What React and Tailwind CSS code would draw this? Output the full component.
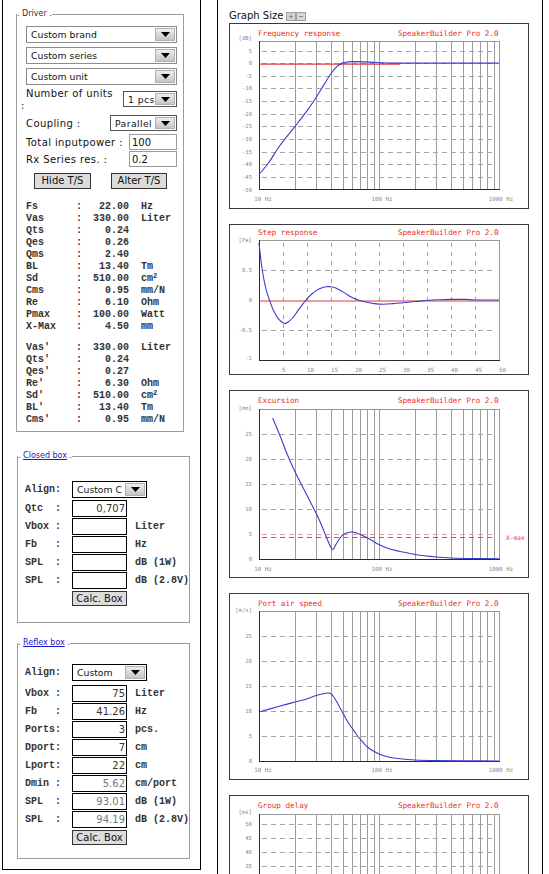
import React from 'react'

const SANS = "font-['DejaVu_Sans',Verdana,sans-serif]"
const MONO = "font-['Liberation_Mono','Courier_New',monospace] font-bold"
const CHART_FONT = "'DejaVu Sans Mono', monospace"

const DRIVER_TS = [
  ['Fs', '22.00', 'Hz'],
  ['Vas', '330.00', 'Liter'],
  ['Qts', '0.24'],
  ['Qes', '0.26'],
  ['Qms', '2.40'],
  ['BL', '13.40', 'Tm'],
  ['Sd', '510.00', 'cm2'],
  ['Cms', '0.95', 'mm/N'],
  ['Re', '6.10', 'Ohm'],
  ['Pmax', '100.00', 'Watt'],
  ['X-Max', '4.50', 'mm'],
]

const DERIVED_TS = [
  ["Vas'", '330.00', 'Liter'],
  ["Qts'", '0.24'],
  ["Qes'", '0.27'],
  ["Re'", '6.30', 'Ohm'],
  ["Sd'", '510.00', 'cm2'],
  ["BL'", '13.40', 'Tm'],
  ["Cms'", '0.95', 'mm/N'],
]

const CLOSED_ROWS = [
  ['Vbox :', '', 'Liter'],
  ['Fb   :', '', 'Hz'],
  ['SPL  :', '', 'dB (1W)'],
  ['SPL  :', '', 'dB (2.8V)'],
]

const REFLEX_ROWS = [
  ['Vbox :', '75', 'Liter'],
  ['Fb   :', '41.26', 'Hz'],
  ['Ports:', '3', 'pcs.'],
  ['Dport:', '7', 'cm'],
  ['Lport:', '22', 'cm'],
  ['Dmin :', '5.62', 'cm/port', true],
  ['SPL  :', '93.01', 'dB (1W)', true],
  ['SPL  :', '94.19', 'dB (2.8V)', true],
]

// ---------- form bits ----------

function Select({ label, className }) {
  return (
    <div className={`flex bg-white border p-[1px] ${className}`}>
      <span className={`flex-1 pl-[3px] text-[9.3px] leading-[13px] text-[#111] truncate ${SANS}`}>{label}</span>
      <span className="w-[20px] flex items-center justify-center bg-linear-to-b from-[#eeeeee] to-[#c4c4c4] border border-[#b0b0b0]">
        <svg width="9" height="5" viewBox="0 0 9 5">
          <path d="M0 0H9L4.5 5Z" fill="#000" />
        </svg>
      </span>
    </div>
  )
}

function Unit({ u }) {
  if (u === 'cm2') return <span>cm<sup className="text-[7px]">2</sup></span>
  return <span>{u}</span>
}

function TsRow({ row }) {
  const [name, val, unit] = row
  return (
    <div className="flex h-[12px] items-center leading-[12px]">
      <span className="w-[50px]">{name}</span>
      <span className="w-[6px]">:</span>
      <span className="w-[47px] text-right">{val}</span>
      <span className="ml-[12px]">{unit && <Unit u={unit} />}</span>
    </div>
  )
}

function BoxRow({ label, value, unit, dim }) {
  return (
    <div className="flex h-[18px] items-center">
      <span className={`w-[47px] whitespace-pre text-[10px] text-[#333] ${MONO}`}>{label}</span>
      <input
        readOnly
        value={value}
        className={`w-[55px] h-[17px] border border-black bg-white text-right pr-[1px] text-[10px] ${SANS} ${dim ? 'text-[#777]' : 'text-[#333]'}`}
      />
      <span className={`ml-[8px] whitespace-pre text-[10px] text-[#333] ${MONO}`}>{unit}</span>
    </div>
  )
}

function CalcButton() {
  return (
    <button className={`block ml-[47px] mt-[2px] w-[55px] h-[15px] bg-[#dcdcdc] border border-[#333] text-[10px] leading-[13px] text-[#111] ${SANS}`}>
      Calc. Box
    </button>
  )
}

// ---------- charts ----------

const X0 = 29
const X1 = 269
const FREQ_LINES = [20, 30, 40, 50, 60, 70, 80, 90, 100, 200, 300, 400, 500, 600, 700, 800, 900]
const lx = (f) => X0 + 120 * Math.log10(f / 10)

function smooth(pts) {
  let d = `M${pts[0][0].toFixed(2)} ${pts[0][1].toFixed(2)}`
  for (let i = 0; i < pts.length - 1; i++) {
    const p0 = pts[i - 1] || pts[i]
    const p1 = pts[i]
    const p2 = pts[i + 1]
    const p3 = pts[i + 2] || p2
    const c1x = p1[0] + (p2[0] - p0[0]) / 6
    const c1y = p1[1] + (p2[1] - p0[1]) / 6
    const c2x = p2[0] - (p3[0] - p1[0]) / 6
    const c2y = p2[1] - (p3[1] - p1[1]) / 6
    d += ` C${c1x.toFixed(2)} ${c1y.toFixed(2)} ${c2x.toFixed(2)} ${c2y.toFixed(2)} ${p2[0].toFixed(2)} ${p2[1].toFixed(2)}`
  }
  return d
}

function Frame({ h, children }) {
  return <div className={`w-[300px] shrink-0 border border-[#3a3a3a] bg-white ${h}`}>{children}</div>
}

function Title({ text, y = 12 }) {
  return (
    <g fontFamily={CHART_FONT} fontSize="7.6" fill="#ee2b2b">
      <text x="28" y={y}>{text}</text>
      <text x="268.5" y={y} textAnchor="end">SpeakerBuilder Pro 2.0</text>
    </g>
  )
}

function YLabels({ items }) {
  return (
    <g fontFamily={CHART_FONT} fontSize="5.6" fill="#8a8a8a" textAnchor="end">
      {items.map(([t, y]) => (
        <text key={t} x="22" y={y + 2}>{t}</text>
      ))}
    </g>
  )
}

function LogXLabels({ y }) {
  return (
    <g fontFamily={CHART_FONT} fontSize="5.8" fill="#8a8a8a" textAnchor="middle">
      <text x={lx(10) + 4} y={y}>10 Hz</text>
      <text x={lx(100) + 3} y={y}>100 Hz</text>
      <text x={lx(1000) + 2} y={y}>1000 Hz</text>
    </g>
  )
}

function Axes({ top, bottom }) {
  return (
    <g shapeRendering="crispEdges">
      <line x1={X0} x2={X1} y1={top + 0.5} y2={top + 0.5} stroke="#9a9a9a" />
      <line x1={X1 + 0.5} x2={X1 + 0.5} y1={top} y2={bottom} stroke="#9a9a9a" />
      <line x1={X0 + 0.5} x2={X0 + 0.5} y1={top} y2={bottom + 1} stroke="#2a2a2a" />
      <line x1={X0} x2={X1 + 1} y1={bottom + 0.5} y2={bottom + 0.5} stroke="#2a2a2a" />
    </g>
  )
}

function LogGrid({ top, bottom, hLines }) {
  return (
    <g shapeRendering="crispEdges">
      {FREQ_LINES.map((f) => {
        const x = Math.round(lx(f)) + 0.5
        return <line key={f} x1={x} x2={x} y1={top} y2={bottom} stroke="#9c9c9c" />
      })}
      {hLines.map((y) => (
        <line key={y} x1={X0 + 3} x2={X1 - 4} y1={Math.round(y) + 0.5} y2={Math.round(y) + 0.5} stroke="#a4a4a4" strokeDasharray="5 4" />
      ))}
    </g>
  )
}

function FrequencyChart() {
  const fy = (db) => 165.5 - ((db + 50) * 139) / 55
  const ticks = [5, 0, -5, -10, -15, -20, -25, -30, -35, -40, -45, -50]
  const pts = [
    [10, -44], [12, -39.5], [15, -32.5], [20, -25], [25, -19], [30, -13.5], [35, -8.3],
    [40, -4], [45, -1.2], [50, 0.1], [55, 0.5], [62, 0.6], [75, 0.5], [90, 0.3], [110, 0.1], [150, 0], [1000, 0],
  ].map(([f, v]) => [lx(f), fy(v)])
  return (
    <Frame h="h-[186px]">
      <svg width="298" height="184" className="block">
        <Title text="Frequency response" />
        <LogGrid top={17} bottom={166} hLines={ticks.slice(0, -1).map(fy)} />
        <Axes top={17} bottom={165} />
        <YLabels items={[['[dB]', 14], ...ticks.map((t) => [String(t), fy(t)])]} />
        <LogXLabels y={177} />
        <line x1={X0} x2={lx(150)} y1={fy(0) + 1} y2={fy(0) + 1} stroke="#e23a3a" strokeWidth="1.2" />
        <path d={smooth(pts)} fill="none" stroke="#3b3bd0" strokeWidth="1.1" />
      </svg>
    </Frame>
  )
}

function StepChart() {
  const sx = (t) => X0 + t * 4.8
  const sy = (v) => 75 - v * 60
  const pts = [
    [0, 0.95], [0.5, 0.6], [1, 0.35], [1.5, 0.17], [2, 0.04], [2.5, -0.07], [3, -0.17], [4, -0.31],
    [5, -0.38], [5.5, -0.39], [6, -0.37], [7, -0.3], [8, -0.19], [9, -0.08], [10, 0.02], [11, 0.1],
    [12, 0.16], [13, 0.2], [14, 0.22], [15, 0.22], [16, 0.2], [17, 0.16], [18, 0.11], [19, 0.06],
    [20, 0.02], [21, -0.01], [22, -0.03], [24, -0.06], [26, -0.07], [28, -0.06], [30, -0.045],
    [32, -0.03], [34, -0.015], [36, 0], [38, 0.005], [40, 0.01], [43, 0.01], [45, 0], [50, 0],
  ].map(([t, v]) => [sx(t), sy(v)])
  return (
    <Frame h="h-[151px]">
      <svg width="298" height="149" className="block">
        <Title text="Step response" y={10} />
        <g shapeRendering="crispEdges">
          {[5, 10, 15, 20, 25, 30, 35, 40, 45].map((t) => {
            const x = Math.round(sx(t)) + 0.5
            return <line key={t} x1={x} x2={x} y1={18} y2={135} stroke="#a4a4a4" strokeDasharray="4 5" />
          })}
          {[0.5, -0.5].map((v) => (
            <line key={v} x1={X0 + 3} x2={X1 - 4} y1={sy(v) + 0.5} y2={sy(v) + 0.5} stroke="#a4a4a4" strokeDasharray="5 4" />
          ))}
        </g>
        <Axes top={15} bottom={135} />
        <YLabels items={[['[Pa]', 15], ['0.5', 45], ['0', 75], ['-0.5', 105], ['-1', 133]]} />
        <g fontFamily={CHART_FONT} fontSize="5.8" fill="#8a8a8a">
          {[5, 10, 15, 20, 25, 30, 35, 40, 45, 50].map((t) => (
            <text key={t} x={sx(t) - (t < 10 ? 1 : 0)} y={146.5}>{t}</text>
          ))}
        </g>
        <line x1={X0} x2={X1} y1={76} y2={76} stroke="#e23a3a" strokeWidth="1.2" />
        <path d={smooth(pts)} fill="none" stroke="#3b3bd0" strokeWidth="1.1" />
      </svg>
    </Frame>
  )
}

function ExcursionChart() {
  const ey = (mm) => 168 - mm * 5
  const pts = [
    [13, 28.2], [15, 24.6], [17, 21.2], [20, 17.4], [25, 12.8], [30, 9.1], [33, 6.9], [36, 4.7],
    [38, 3.3], [40, 2.2], [41, 1.9], [42, 2.1], [44, 3.0], [47, 4.1], [50, 4.8], [55, 5.3], [60, 5.4],
    [65, 5.2], [70, 4.9], [80, 4.2], [90, 3.5], [100, 2.9], [120, 2.1], [150, 1.5], [200, 0.9],
    [300, 0.4], [400, 0.2], [600, 0.1], [1000, 0.05],
  ].map(([f, v]) => [lx(f), ey(v)])
  return (
    <Frame h="h-[188px]">
      <svg width="298" height="186" className="block">
        <Title text="Excursion" />
        <LogGrid top={18} bottom={168} hLines={[25, 20, 15, 10].map(ey)} />
        <line x1={X0 + 3} x2={X1 - 4} y1={143.5} y2={143.5} stroke="#e79a9a" strokeDasharray="5 4" />
        <line x1={X0 + 3} x2={X1 - 4} y1={146.5} y2={146.5} stroke="#e04848" strokeDasharray="5 4" />
        <Axes top={18} bottom={168} />
        <YLabels items={[['[mm]', 17], ['25', ey(25)], ['20', ey(20)], ['15', ey(15)], ['10', ey(10)], ['5', ey(5)], ['0', ey(0)]]} />
        <text x="276" y="149" fontFamily={CHART_FONT} fontSize="6.2" fill="#e23a3a">X-max</text>
        <LogXLabels y={179.5} />
        <path d={smooth(pts)} fill="none" stroke="#3b3bd0" strokeWidth="1.1" />
      </svg>
    </Frame>
  )
}

function PortChart() {
  const py = (v) => 167 - v * 5
  const pts = [
    [10, 9.8], [15, 11], [20, 11.8], [25, 12.4], [30, 13.1], [35, 13.5], [38, 13.6], [40, 13.4],
    [42, 12.8], [45, 11.6], [50, 9.6], [55, 7.8], [60, 6.5], [65, 5.3], [70, 4.3], [80, 2.8],
    [90, 2.0], [100, 1.4], [120, 0.8], [150, 0.45], [200, 0.2], [300, 0.08], [500, 0.03], [1000, 0],
  ].map(([f, v]) => [lx(f), py(v)])
  return (
    <Frame h="h-[187px]">
      <svg width="298" height="185" className="block">
        <Title text="Port air speed" />
        <LogGrid top={17} bottom={167} hLines={[25, 20, 15, 10, 5].map(py)} />
        <Axes top={17} bottom={167} />
        <YLabels items={[['[m/s]', 16], ['25', py(25)], ['20', py(20)], ['15', py(15)], ['10', py(10)], ['5', py(5)], ['0', py(0)]]} />
        <LogXLabels y={177.5} />
        <path d={smooth(pts)} fill="none" stroke="#3b3bd0" strokeWidth="1.1" />
      </svg>
    </Frame>
  )
}

// only the top of this one is inside the window
function GroupDelayChart() {
  const gy = (ms) => 28 + (50 - ms) * 2.8
  const ticks = [50, 45, 40, 35, 30, 25, 20, 15, 10, 5]
  const pts = [
    [10, 10], [20, 16], [30, 22], [38, 24], [45, 18], [55, 11], [70, 6], [100, 3], [200, 1], [1000, 0.2],
  ].map(([f, v]) => [lx(f), gy(v)])
  return (
    <Frame h="h-[188px]">
      <svg width="298" height="186" className="block">
        <Title text="Group delay" />
        <LogGrid top={18} bottom={168} hLines={ticks.map(gy)} />
        <Axes top={18} bottom={168} />
        <YLabels items={[['[ms]', 16], ...[50, 45, 40, 35].map((t) => [String(t), gy(t)])]} />
        <path d={smooth(pts)} fill="none" stroke="#3b3bd0" strokeWidth="1.1" />
      </svg>
    </Frame>
  )
}

// ---------- panels ----------

function DriverFieldset() {
  return (
    <fieldset className="ml-[13px] mt-[9px] w-[168px] border border-[#9c9c9c]">
      <legend className={`text-[8px] leading-[10px] text-[#333] ${SANS}`}>. Driver .</legend>
      <div className={`pl-[4px] pr-[6px] pt-[7px] pb-[5px] ${SANS}`}>
        <div className="flex flex-col gap-[4px] pl-[5px]">
          <Select label="Custom brand" className="h-[17px] border-[#8c8c8c]" />
          <Select label="Custom series" className="h-[17px] border-[#8c8c8c]" />
          <Select label="Custom unit" className="h-[17px] border-[#8c8c8c]" />
        </div>

        <div className="mt-[3px] flex justify-between text-[10px] tracking-[0.4px] text-[#111]">
          <div className="leading-[12px]">
            <div className="pl-[5px]">Number of units</div>
            <div>:</div>
          </div>
          <Select label="1 pcs" className="mt-[3px] w-[54px] h-[16px] border-[#555]" />
        </div>

        <div className="mt-[2px] flex h-[18px] items-center justify-between text-[10px] tracking-[0.4px] text-[#111]">
          <span className="pl-[5px]">Coupling :</span>
          <Select label="Parallel" className="w-[67px] h-[16px] border-[#555]" />
        </div>

        <div className="mt-[2px] flex h-[16px] items-center justify-between text-[10px] tracking-[0.4px] text-[#111]">
          <span className="pl-[5px]">Total inputpower :</span>
          <input readOnly value="100" className="w-[48px] h-[16px] border border-[#9c9c9c] bg-white pl-[2px] text-[10px] tracking-normal" />
        </div>

        <div className="mt-[1px] flex h-[16px] items-center justify-between text-[10px] tracking-[0.4px] text-[#111]">
          <span className="pl-[5px]">Rx Series res. :</span>
          <input readOnly value="0.2" className="w-[48px] h-[16px] border border-[#9c9c9c] bg-white pl-[2px] text-[10px] tracking-normal" />
        </div>

        <div className="mt-[6px] flex gap-[20px] pl-[13px]">
          <button className="w-[57px] h-[16px] bg-[#dcdcdc] border border-[#333] text-[10px] leading-[14px] text-[#111]">Hide T/S</button>
          <button className="w-[56px] h-[16px] bg-[#dcdcdc] border border-[#333] text-[10px] leading-[14px] text-[#111]">Alter T/S</button>
        </div>

        <div className={`mt-[12px] pl-[5px] text-[10px] text-[#333] ${MONO}`}>
          {DRIVER_TS.map((r) => <TsRow key={r[0]} row={r} />)}
          <div className="mt-[9px]">
            {DERIVED_TS.map((r) => <TsRow key={r[0]} row={r} />)}
          </div>
        </div>
      </div>
    </fieldset>
  )
}

function BoxLegend({ name }) {
  return (
    <legend className={`text-[8px] leading-[10px] text-[#333] ${SANS}`}>
      . <a href="#" className="text-[#1a1acc] underline">{name}</a> .
    </legend>
  )
}

function ClosedBoxFieldset() {
  return (
    <fieldset className="ml-[14px] mt-[19px] w-[173px] border border-[#9c9c9c]">
      <BoxLegend name="Closed box" />
      <div className="pl-[7px] pt-[19px] pb-[16px]">
        <div className="flex h-[18px] items-center">
          <span className={`w-[47px] text-[10px] text-[#333] ${MONO}`}>Align:</span>
          <Select label="Custom C" className="w-[75px] h-[17px] border-black" />
        </div>
        <div className="mt-[1px]">
          <BoxRow label="Qtc  :" value="0,707" />
          {CLOSED_ROWS.map(([l, v, u], i) => <BoxRow key={i} label={l} value={v} unit={u} />)}
        </div>
        <CalcButton />
      </div>
    </fieldset>
  )
}

function ReflexBoxFieldset() {
  return (
    <fieldset className="ml-[14px] mt-[15px] w-[173px] border border-[#9c9c9c]">
      <BoxLegend name="Reflex box" />
      <div className="pl-[7px] pt-[15px] pb-[13px]">
        <div className="flex h-[18px] items-center">
          <span className={`w-[47px] text-[10px] text-[#333] ${MONO}`}>Align:</span>
          <Select label="Custom" className="w-[75px] h-[17px] border-black" />
        </div>
        <div className="mt-[3px]">
          {REFLEX_ROWS.map(([l, v, u, dim], i) => <BoxRow key={i} label={l} value={v} unit={u} dim={dim} />)}
        </div>
        <CalcButton />
      </div>
    </fieldset>
  )
}

function GraphSizeIcons() {
  return (
    <svg width="20" height="9" viewBox="0 0 20 9" className="ml-[3px]">
      <rect x="0.5" y="0.5" width="9" height="8" fill="#d6d6d6" stroke="#a0a0a0" />
      <path d="M3 4.5H7M5 2.5V6.5" stroke="#8a8a8a" />
      <rect x="10.5" y="0.5" width="9" height="8" fill="#d6d6d6" stroke="#a0a0a0" />
      <path d="M13 4.5H17" stroke="#8a8a8a" />
    </svg>
  )
}

export default function App() {
  return (
    <div className={`h-[874px] w-[549px] overflow-hidden bg-white flex items-start pl-[2px] gap-[16px] ${SANS}`}>
      <aside className="w-[199px] h-[870px] border-x border-b border-black">
        <DriverFieldset />
        <ClosedBoxFieldset />
        <ReflexBoxFieldset />
      </aside>

      <main className="w-[326px] h-[874px] overflow-hidden border-x border-black pl-[11px] pt-[10px]">
        <div className="flex h-[12px] items-center mb-[1px]">
          <span className="text-[10px] leading-[12px] text-[#111]">Graph Size</span>
          <GraphSizeIcons />
        </div>
        <div className="flex flex-col gap-[15px]">
          <FrequencyChart />
          <StepChart />
          <ExcursionChart />
          <PortChart />
          <GroupDelayChart />
        </div>
      </main>
    </div>
  )
}
